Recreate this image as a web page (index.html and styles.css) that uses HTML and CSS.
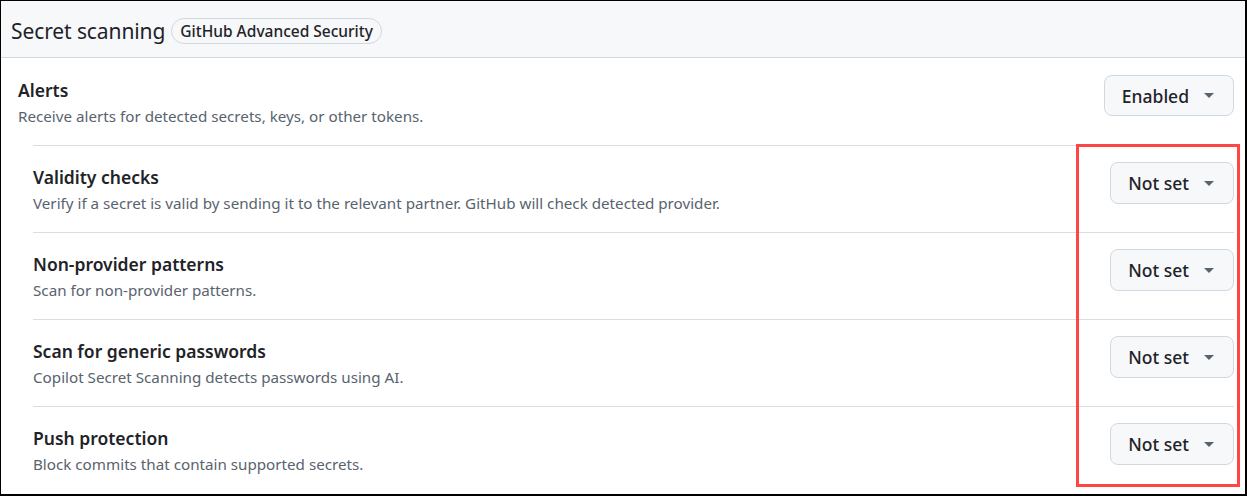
FILE: index.html
```html
<!DOCTYPE html>
<html lang="en">
<head>
<meta charset="utf-8">
<title>Secret scanning</title>
<link rel="stylesheet" href="styles.css">
</head>
<body>
<div class="frame">
  <div class="header">
    <h2 class="header-title">Secret scanning</h2>
    <span class="badge">GitHub Advanced Security</span>
  </div>
  <div class="body">
    <div class="row row-main">
      <div class="text">
        <div class="title">Alerts</div>
        <div class="desc">Receive alerts for detected secrets, keys, or other tokens.</div>
      </div>
      <button class="btn btn-wide">Enabled<span class="caret"></span></button>
    </div>
    <div class="subrows">
      <div class="row row-sub">
        <div class="text">
          <div class="title">Validity checks</div>
          <div class="desc">Verify if a secret is valid by sending it to the relevant partner. GitHub will check detected provider.</div>
        </div>
        <button class="btn">Not set<span class="caret"></span></button>
      </div>
      <div class="row row-sub">
        <div class="text">
          <div class="title">Non-provider patterns</div>
          <div class="desc">Scan for non-provider patterns.</div>
        </div>
        <button class="btn">Not set<span class="caret"></span></button>
      </div>
      <div class="row row-sub">
        <div class="text">
          <div class="title">Scan for generic passwords</div>
          <div class="desc">Copilot Secret Scanning detects passwords using AI.</div>
        </div>
        <button class="btn">Not set<span class="caret"></span></button>
      </div>
      <div class="row row-sub">
        <div class="text">
          <div class="title">Push protection</div>
          <div class="desc">Block commits that contain supported secrets.</div>
        </div>
        <button class="btn">Not set<span class="caret"></span></button>
      </div>
    </div>
  </div>
  <div class="highlight"></div>
</div>
</body>
</html>
```
FILE: styles.css
```css
* { box-sizing: border-box; }
html, body { margin: 0; padding: 0; background: #fff; }
body {
  font-family: "Noto Sans", "Open Sans", sans-serif;
  color: #1f2328;
}
.frame {
  position: relative;
  width: 1247px;
  height: 496px;
  border-style: solid;
  border-color: #000;
  border-width: 1px 2px 2px 1px;
  overflow: hidden;
}
.header {
  height: 57px;
  background: #f6f8fa;
  border-bottom: 1px solid #d1d9e0;
  display: flex;
  align-items: center;
  gap: 6px;
  padding: 3px 0 0 10px;
}
.header-title {
  margin: 0;
  font-size: 21px;
  font-weight: 400;
  color: #1f2328;
  letter-spacing: -0.1px;
}
.badge {
  display: inline-flex;
  align-items: center;
  height: 26px;
  padding: 0 8px;
  border: 1px solid #d1d9e0;
  border-radius: 13px;
  font-size: 15.5px;
  font-weight: 500;
  color: #1f2328;
  background: #f6f8fa;
}
.body {
  padding: 0 11px 0 17px;
}
.row {
  display: flex;
  justify-content: space-between;
  align-items: flex-start;
  height: 87px;
}
.row-main { padding-top: 17px; }
.subrows { margin-left: 15px; }
.row-sub {
  border-top: 1px solid #d8dee4;
  padding-top: 16px;
}
.text { padding-top: 2px; }
.title {
  font-size: 17.5px;
  font-weight: 600;
  line-height: 26px;
  color: #1f2328;
}
.desc {
  font-size: 15.2px;
  line-height: 22px;
  color: #59636e;
  margin-top: 2px;
}
.btn {
  display: inline-flex;
  align-items: center;
  height: 42px;
  padding: 0 19px 0 17px;
  gap: 15px;
  border: 1px solid #d1d9e0;
  border-radius: 8px;
  background: #f6f8fa;
  font-family: inherit;
  font-size: 17.5px;
  font-weight: 500;
  color: #1f2328;
}
.btn-wide { height: 41px; }
.caret {
  width: 0;
  height: 0;
  border-left: 5px solid transparent;
  border-right: 5px solid transparent;
  border-top: 5px solid #59636e;
}
.highlight {
  position: absolute;
  left: 1075px;
  top: 143px;
  width: 164px;
  height: 343px;
  border: 3px solid #fe4646;
  pointer-events: none;
}
```
